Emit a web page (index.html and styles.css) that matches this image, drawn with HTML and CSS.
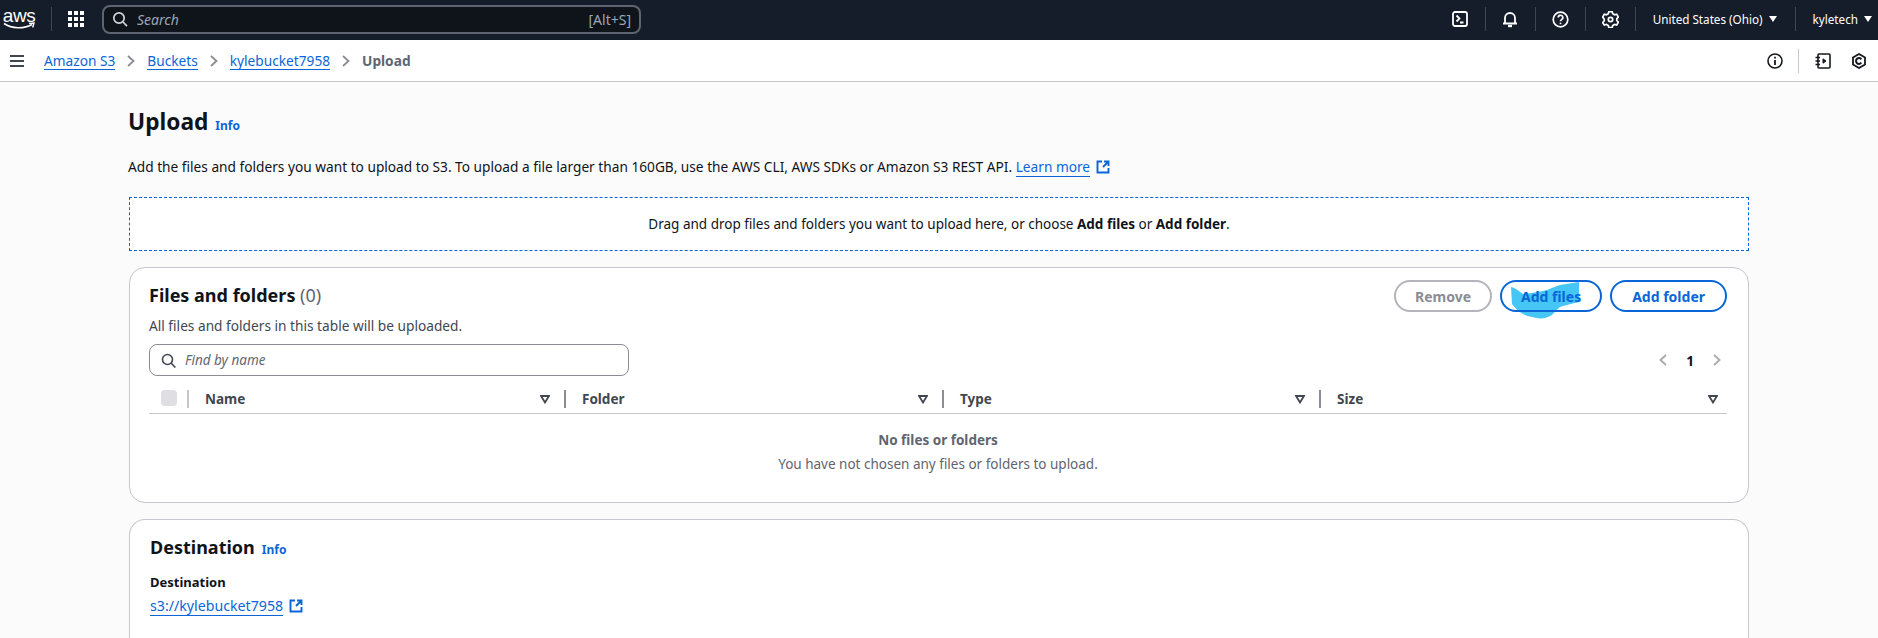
FILE: index.html
```html
<!DOCTYPE html>
<html>
<head>
  <title>Upload - S3</title>
  <link rel="stylesheet" href="styles.css">
</head>
<body>

  <!-- barra superior -->
  <header class="topbar">
    <div class="aws-logo">
      <span class="aws-word">aws</span>
      <svg class="aws-smile" width="32" height="8" viewBox="0 0 32 8"><path d="M1 1.500C9 7 21 7 29 2.500" fill="none" stroke="#fff" stroke-width="1.600"/><path d="M26 1.500L31 1L29.700 5.500" fill="none" stroke="#fff" stroke-width="1.400"/></svg>
    </div>
    <span class="top-sep"></span>
    <svg class="grid-icon" width="16" height="16" viewBox="0 0 16 16" fill="#fff">
      <rect width="4" height="4"/><rect x="6" width="4" height="4"/><rect x="12" width="4" height="4"/>
      <rect y="6" width="4" height="4"/><rect x="6" y="6" width="4" height="4"/><rect x="12" y="6" width="4" height="4"/>
      <rect y="12" width="4" height="4"/><rect x="6" y="12" width="4" height="4"/><rect x="12" y="12" width="4" height="4"/>
    </svg>
    <div class="top-search">
      <svg width="16" height="16" viewBox="0 0 16 16" fill="none" stroke="#d1d5db" stroke-width="1.700"><circle cx="7" cy="7" r="5.200"/><path d="M11 11l4 4.200"/></svg>
      <span class="top-search-text">Search</span>
      <span class="top-search-key">[Alt+S]</span>
    </div>
    <div class="top-right">
      <div class="top-cell">
        <svg width="16" height="16" viewBox="0 0 16 16" fill="none" stroke="#fff" stroke-width="1.800"><rect x="1" y="1" width="14" height="14" rx="2"/><path d="M4.500 4.500L7.500 7.500L4.500 10.500M8 11.500h3.500"/></svg>
      </div>
      <div class="top-cell">
        <svg width="16" height="17" viewBox="0 0 16 17" fill="none" stroke="#fff" stroke-width="1.800"><path d="M1 12.500h14M3 12.500V7a5 5 0 0 1 10 0v5.500"/><path d="M6 15h4" stroke-width="2.400"/></svg>
      </div>
      <div class="top-cell">
        <svg width="17" height="17" viewBox="0 0 17 17" fill="none" stroke="#fff" stroke-width="1.700"><circle cx="8.500" cy="8.500" r="7.300"/><path d="M6.200 6.600a2.300 2.300 0 1 1 3.400 2c-.8.5-1.100.9-1.100 1.700"/><path d="M8.500 11.700v1.500"/></svg>
      </div>
      <div class="top-cell">
        <svg width="17" height="17" viewBox="0 0 17 17" fill="none" stroke="#fff" stroke-width="1.700"><path d="M6.800 1h3.400l.5 2.100 1.900 1.100 2.100-.6 1.700 2.900-1.600 1.500v2l1.600 1.500-1.700 2.900-2.100-.6-1.900 1.100-.5 2.100H6.800l-.5-2.100-1.900-1.100-2.100.6L.6 11.900l1.600-1.500v-2L.6 6.500l1.700-2.900 2.100.6 1.900-1.100z" transform="translate(0 -.4)"/><circle cx="8.500" cy="8.500" r="2.200"/></svg>
      </div>
      <div class="top-cell top-menu">United States (Ohio) <span class="caret"></span></div>
      <div class="top-cell top-menu top-last">kyletech <span class="caret"></span></div>
    </div>
  </header>

  <!-- migas de pan -->
  <nav class="crumbbar">
    <svg class="menu-icon" width="14" height="12" viewBox="0 0 14 12" fill="#414750"><rect width="14" height="2"/><rect y="5" width="14" height="2"/><rect y="10" width="14" height="2"/></svg>
    <a class="crumb">Amazon S3</a>
    <svg class="crumb-arrow" width="8" height="12" viewBox="0 0 8 12" fill="none" stroke="#8c8c94" stroke-width="1.800"><path d="M1 1l5.500 5L1 11"/></svg>
    <a class="crumb">Buckets</a>
    <svg class="crumb-arrow" width="8" height="12" viewBox="0 0 8 12" fill="none" stroke="#8c8c94" stroke-width="1.800"><path d="M1 1l5.500 5L1 11"/></svg>
    <a class="crumb">kylebucket7958</a>
    <svg class="crumb-arrow" width="8" height="12" viewBox="0 0 8 12" fill="none" stroke="#8c8c94" stroke-width="1.800"><path d="M1 1l5.500 5L1 11"/></svg>
    <span class="crumb-current">Upload</span>
    <div class="crumb-tools">
      <svg width="16" height="16" viewBox="0 0 16 16" fill="none" stroke="#16191f" stroke-width="1.600"><circle cx="8" cy="8" r="7"/><path d="M8 7v5" stroke-width="1.800"/><path d="M8 3.800v1.600" stroke-width="1.800"/></svg>
      <span class="tool-sep"></span>
      <svg width="16" height="16" viewBox="0 0 16 16" fill="none" stroke="#16191f" stroke-width="1.600"><rect x="3" y="1" width="12" height="14" rx="1"/><path d="M0.500 4.500H5M0.500 8H5M0.500 11.500H5"/><path d="M8 5.800l3 2.200-3 2.200z" fill="#16191f" stroke-width="1"/></svg>
      <svg class="tool-hex" width="16" height="16" viewBox="0 0 16 16" fill="none" stroke="#16191f" stroke-width="1.800"><path d="M8 1l6 3.500v7L8 15l-6-3.500v-7z"/><path d="M10.300 6.300A2.900 2.900 0 1 0 10.300 9.700" stroke-width="2"/></svg>
    </div>
  </nav>

  <main class="content">
    <div class="page-head">
      <h1>Upload</h1>
      <a class="info">Info</a>
    </div>
    <p class="intro">Add the files and folders you want to upload to S3. To upload a file larger than 160GB, use the AWS CLI, AWS SDKs or Amazon S3 REST API. <a class="link">Learn more</a>
      <svg class="ext-icon" width="14" height="14" viewBox="0 0 14 14" fill="none" stroke="#0a66d8" stroke-width="1.900"><path d="M6 1.500H1.500v11h11V8M8 1.500h4.500V6M12.500 1.500L7 7"/></svg>
    </p>

    <div class="dropzone"><span>Drag and drop files and folders you want to upload here, or choose <b>Add files</b> or <b>Add folder</b>.</span></div>

    <!-- Tabla de archivos -->
    <section class="card files-card">
      <!-- marca azul detras del texto del boton -->
      <svg class="scribble" width="69" height="37" viewBox="0 0 69 37"><path d="M0 5C5 6 9 10 12 12C20 11 29 10 36 8C41 6 45 4 49 3L68 0L68 20C61 22 54 23 49 25C45 28 43 31 41 33C36 36 31 37 26 36C20 35 16 34 12 32C7 29 4 26 1 22z" fill="#45c6f5"/></svg>

      <div class="card-head">
        <div>
          <h2>Files and folders <span class="count">(0)</span></h2>
          <div class="card-desc">All files and folders in this table will be uploaded.</div>
        </div>
        <div class="actions">
          <button class="btn btn-disabled">Remove</button>
          <button class="btn btn-files">Add files</button>
          <button class="btn">Add folder</button>
        </div>
      </div>

      <div class="filter-row">
        <div class="filter">
          <svg width="15" height="15" viewBox="0 0 15 15" fill="none" stroke="#414750" stroke-width="1.600"><circle cx="6.500" cy="6.500" r="5"/><path d="M10.300 10.300l4 4.200"/></svg>
          <span>Find by name</span>
        </div>
        <div class="pager">
          <svg width="8" height="12" viewBox="0 0 8 12" fill="none" stroke="#a8a8b0" stroke-width="1.800"><path d="M7 1L1.500 6 7 11"/></svg>
          <b>1</b>
          <svg width="8" height="12" viewBox="0 0 8 12" fill="none" stroke="#a8a8b0" stroke-width="1.800"><path d="M1 1l5.500 5L1 11"/></svg>
        </div>
      </div>

      <div class="table-head">
        <div class="check-col"><span class="checkbox"></span></div>
        <div class="col col-name">Name<svg class="sort" width="10" height="9" viewBox="0 0 10 9" fill="none" stroke="#414750" stroke-width="1.800"><path d="M1 1h8L5 7.500z"/></svg></div>
        <div class="col col-folder">Folder<svg class="sort" width="10" height="9" viewBox="0 0 10 9" fill="none" stroke="#414750" stroke-width="1.800"><path d="M1 1h8L5 7.500z"/></svg></div>
        <div class="col col-type">Type<svg class="sort" width="10" height="9" viewBox="0 0 10 9" fill="none" stroke="#414750" stroke-width="1.800"><path d="M1 1h8L5 7.500z"/></svg></div>
        <div class="col col-size">Size<svg class="sort" width="10" height="9" viewBox="0 0 10 9" fill="none" stroke="#414750" stroke-width="1.800"><path d="M1 1h8L5 7.500z"/></svg></div>
      </div>

      <div class="empty">
        <b>No files or folders</b>
        <span>You have not chosen any files or folders to upload.</span>
      </div>
    </section>

    <section class="card dest-card">
      <div class="page-head">
        <h2>Destination</h2>
        <a class="info">Info</a>
      </div>
      <div class="field-label">Destination</div>
      <div class="field-value"><a class="link">s3://kylebucket7958</a>
        <svg class="ext-icon" width="14" height="14" viewBox="0 0 14 14" fill="none" stroke="#0a66d8" stroke-width="1.900"><path d="M6 1.500H1.500v11h11V8M8 1.500h4.500V6M12.500 1.500L7 7"/></svg>
      </div>
    </section>
  </main>
</body>
</html>
```

FILE: styles.css
```css
html, body {
  margin: 0;
  height: 638px;
  overflow: hidden;
}

body {
  font-family: "Noto Sans", Arial, sans-serif;
  font-size: 13.7px;
  color: #0f141a;
  background-color: #fbfbfb;
}

.topbar {
  height: 40px;
  padding-bottom: 2px;
  background-color: #161d2a;
  display: flex;
  align-items: center;
  color: #fff;
  box-sizing: border-box;
}

.aws-logo {
  width: 32px;
  margin-left: 3px;
  display: flex;
  flex-direction: column;
  align-items: center;
}

.aws-word {
  font-size: 19px;
  line-height: 14px;
  letter-spacing: -0.5px;
  font-family: "Liberation Sans", sans-serif;
}

.aws-smile {
  margin-top: -1px;
}

.top-sep {
  width: 1px;
  height: 24px;
  background-color: #424650;
  margin-left: 16px;
}

.grid-icon {
  margin-left: 16px;
}

.top-search {
  margin-left: 18px;
  width: 539px;
  height: 29px;
  box-sizing: border-box;
  border: 2px solid #5f6570;
  border-radius: 8px;
  background-color: #0f141a;
  display: flex;
  align-items: center;
  padding: 0 8px;
  font-size: 14px;
}

.top-search-text {
  font-style: italic;
  color: #9ba7b6;
  margin-left: 9px;
  flex: 1;
}

.top-search-key {
  color: #9ba7b6;
}

.top-right {
  margin-left: auto;
  display: flex;
  align-items: center;
  padding-right: 6px;
}

.top-cell {
  height: 24px;
  display: flex;
  align-items: center;
  justify-content: center;
  width: 49px;
  border-left: 1px solid #424650;
}

.top-cell:first-child {
  border-left: none;
}

.top-menu {
  width: auto;
  padding: 0 18px 0 17px;
  font-size: 11.7px;
  gap: 6px;
}

.top-last {
  padding-right: 0;
}

.caret {
  width: 0;
  height: 0;
  border-left: 4.500px solid transparent;
  border-right: 4.500px solid transparent;
  border-top: 6px solid #fff;
}

.crumbbar {
  height: 42px;
  box-sizing: border-box;
  background-color: #fff;
  border-bottom: 1px solid #c6c6cd;
  display: flex;
  align-items: center;
  padding: 0 11px 0 10px;
}

.menu-icon {
  margin-right: 20px;
}

.crumb {
  color: #0a66d8;
  border-bottom: 1px solid #0a66d8;
  line-height: 17px;
}

.crumb-arrow {
  margin: 0 12px;
}

.crumb-current {
  color: #5f6570;
  font-weight: bold;
}

.crumb-tools {
  margin-left: auto;
  display: flex;
  align-items: center;
}

.tool-sep {
  width: 1px;
  height: 24px;
  background-color: #c6c6cd;
  margin: 0 16px 0 15px;
}

.tool-hex {
  margin-left: 20px;
}

.content {
  padding: 0 129px 0 128px;
}

.page-head {
  display: flex;
  align-items: baseline;
}

.content > .page-head {
  padding-top: 24px;
}

h1 {
  font-size: 22.7px;
  line-height: 32px;
  margin: 0;
}

.info {
  color: #0a66d8;
  font-size: 12px;
  font-weight: bold;
  margin-left: 7px;
}

.intro {
  margin: 19px 0 0 0;
  line-height: 20px;
}

.link {
  color: #0a66d8;
  border-bottom: 1px solid #0a66d8;
}

.ext-icon {
  margin-left: 2px;
  vertical-align: -2px;
}

.dropzone {
  margin: 20px 0 0 1px;
  height: 54px;
  box-sizing: border-box;
  border: 1px dashed #0a66d8;
  background-color: #fff;
  display: flex;
  align-items: center;
  justify-content: center;
  font-size: 13.5px;
}

.card {
  background-color: #fff;
  border: 1px solid #c6c6cd;
  border-radius: 16px;
  margin-left: 1px;
  position: relative;
}

.files-card {
  margin-top: 16px;
  height: 236px;
  box-sizing: border-box;
  padding: 12px 21px 0 19px;
}

.card-head {
  display: flex;
  justify-content: space-between;
}

h2 {
  font-size: 18px;
  line-height: 24px;
  margin: 3px 0 0 0;
}

.count {
  font-weight: normal;
  color: #5f6570;
}

.card-desc {
  font-size: 13.7px;
  line-height: 18px;
  margin-top: 10px;
  color: #414750;
}

.actions {
  display: flex;
  gap: 8px;
}

.btn {
  height: 32px;
  box-sizing: border-box;
  border: 2px solid #0a66d8;
  border-radius: 16px;
  background-color: transparent;
  color: #0a66d8;
  font-family: inherit;
  font-size: 14px;
  font-weight: bold;
  padding: 0 20px;
  position: relative;
  z-index: 1;
}

.btn-disabled {
  border-color: #b4b4bb;
  color: #8c8c94;
  padding: 0 19px;
}

.btn-files {
  padding: 0 19px;
}

.filter-row {
  display: flex;
  justify-content: space-between;
  align-items: center;
  margin-top: 9px;
}

.filter {
  width: 480px;
  height: 32px;
  box-sizing: border-box;
  border: 1px solid #8c8c94;
  border-radius: 8px;
  display: flex;
  align-items: center;
  padding: 0 11px;
  gap: 9px;
  font-style: italic;
  font-size: 13.5px;
  color: #656871;
}

.pager {
  display: flex;
  align-items: center;
  gap: 19px;
  padding-right: 6px;
}

.table-head {
  display: flex;
  align-items: center;
  height: 29px;
  box-sizing: border-box;
  margin-top: 9px;
  border-bottom: 1px solid #c6c6cd;
  font-weight: bold;
  color: #414750;
  font-size: 13.5px;
}

.check-col {
  width: 40px;
  height: 18px;
  box-sizing: border-box;
  padding-left: 12px;
  border-right: 2px solid #c6c6cd;
}

.checkbox {
  display: block;
  width: 16px;
  height: 16px;
  border-radius: 4px;
  background-color: #dedee3;
}

.col {
  height: 18px;
  line-height: 18px;
  display: flex;
  align-items: center;
  justify-content: space-between;
  box-sizing: border-box;
  padding: 0 14px 0 16px;
  border-right: 2px solid #8c8c94;
}

.col-name {
  width: 377px;
}

.col-folder {
  width: 378px;
}

.col-type {
  width: 377px;
}

.col-size {
  flex: 1;
  border-right: none;
  padding-right: 9px;
}

.empty {
  display: flex;
  flex-direction: column;
  align-items: center;
  padding-top: 14px;
  color: #5f6570;
  font-size: 13.5px;
  line-height: 24px;
}

.scribble {
  position: absolute;
  left: 1381px;
  top: 14px;
}

/* la tarjeta sigue mas alla del borde de la ventana */
.dest-card {
  margin-top: 16px;
  height: 119px;
  box-sizing: border-box;
  padding: 12px 20px 0 20px;
  border-bottom: none;
  border-radius: 16px 16px 0 0;
}

.field-label {
  font-weight: bold;
  font-size: 13px;
  line-height: 18px;
  margin-top: 14px;
}

.field-value {
  font-size: 14.2px;
  line-height: 18px;
  margin-top: 6px;
}
```
